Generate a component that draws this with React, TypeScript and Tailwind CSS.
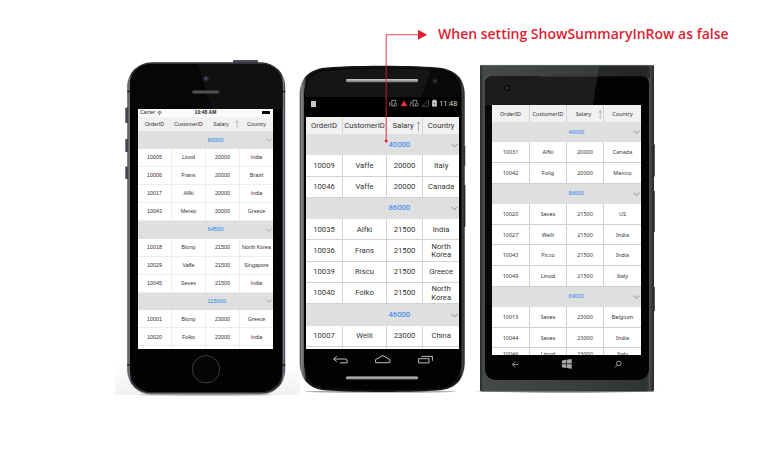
import React from "react";

type Line = { summary: string } | { cells: string[] };

const group = (summary: string): Line => ({ summary });
const row = (...cells: string[]): Line => ({ cells });

interface GridProps {
  lines: Line[];
  cols: string;
  text: string;
  summaryText: string;
  headerHeight: string;
  groupHeight: string;
  rowHeight: string;
  lastHeight: string;
  line: string;
  arrow: string;
  chevron: string;
}

const HEADERS = ["OrderID", "CustomerID", "Salary", "Country"];

function Grid(p: GridProps) {
  return (
    <div className={`bg-white text-[#333] ${p.text}`}>
      <div className={`grid ${p.cols} ${p.headerHeight} bg-[#f1f1f1]`}>
        {HEADERS.map((h, i) => (
          <div
            key={h}
            className={`relative flex items-center justify-center whitespace-nowrap pt-[1px] ${i < 3 ? `border-r ${p.line}` : ""}`}
          >
            <span className={i === 2 ? "pr-[3px]" : ""}>{h}</span>
            {i === 2 && (
              <svg viewBox="0 0 4 9" className={`absolute ${p.arrow}`} fill="none" stroke="#aaa" strokeWidth="0.8">
                <path d="M2 9V0.7M0.3 2.6L2 0.7L3.7 2.6" />
              </svg>
            )}
          </div>
        ))}
      </div>
      {p.lines.map((l, i) =>
        "summary" in l ? (
          <div key={i} className={`grid ${p.cols} ${i === 0 ? p.groupHeight : p.rowHeight} items-center bg-[#dfdfdf]`}>
            <span className={`col-start-3 pl-[1.5px] text-[#1c84f3] ${p.summaryText}`}>{l.summary}</span>
            <svg
              viewBox="0 0 7 4"
              className={`justify-self-end ${p.chevron}`}
              fill="none"
              stroke="#a5a5a5"
              strokeWidth="1.1"
            >
              <path d="M0.5 0.6L3.5 3.3L6.5 0.6" />
            </svg>
          </div>
        ) : (
          <div key={i} className={`grid ${p.cols} ${i === p.lines.length - 1 ? p.lastHeight : p.rowHeight}`}>
            {l.cells.map((c, j) => (
              <div
                key={j}
                className={`flex items-center justify-center border-b pt-[1px] text-center ${p.line} ${j < 3 ? "border-r" : ""}`}
              >
                {c}
              </div>
            ))}
          </div>
        ),
      )}
    </div>
  );
}

function IPhone() {
  return (
    <section className="relative h-[350px] w-[185px] shrink-0 pt-[53px] pl-[23px]">
      <svg viewBox="115 56 185 350" className="absolute inset-0 h-full w-full">
        <defs>
          <linearGradient id="floorA" x1="0" y1="0" x2="0" y2="1">
            <stop offset="0" stopColor="#fff" />
            <stop offset="1" stopColor="#f1f1f1" />
          </linearGradient>
          <linearGradient id="steelA" x1="0" y1="0" x2="1" y2="0">
            <stop offset="0" stopColor="#3b3f46" />
            <stop offset="0.012" stopColor="#777b82" />
            <stop offset="0.025" stopColor="#30333a" />
            <stop offset="0.975" stopColor="#30333a" />
            <stop offset="0.988" stopColor="#777b82" />
            <stop offset="1" stopColor="#3b3f46" />
          </linearGradient>
          <clipPath id="faceA">
            <rect x="130" y="64" width="152.5" height="328" rx="21" />
          </clipPath>
        </defs>
        <rect x="115" y="363" width="185" height="32" fill="url(#floorA)" />
        <ellipse cx="206" cy="394.6" rx="67" ry="1.4" fill="#c8c8c8" />
        <rect x="233" y="60" width="25" height="4" rx="0.8" fill="#4b4e54" />
        <rect x="125.3" y="107.5" width="3" height="15.5" rx="0.8" fill="#44484f" />
        <rect x="125.3" y="139" width="3" height="13" rx="0.8" fill="#44484f" />
        <rect x="125.3" y="166.5" width="3" height="12.5" rx="0.8" fill="#44484f" />
        <rect x="127.3" y="62.3" width="157.9" height="332" rx="24" fill="url(#steelA)" />
        <path d="M135 388C140 393 146 393.7 153 393.7H260C267 393.7 273 393 278 387" fill="none" stroke="#999" strokeWidth="0.7" />
        <path d="M127.3 91.5h3M282 91.5h3.2M127.3 365h3M282 365h3.2" stroke="#15171a" strokeWidth="1.3" />
        <g clipPath="url(#faceA)">
          <rect x="127" y="62" width="160" height="334" fill="#030303" />
          <path d="M197 62L211 109H283V62Z" fill="#101010" />
          <path d="M127 62H197L211 109H127Z" fill="#060606" />
        </g>
        <circle cx="206" cy="78.6" r="3" fill="#23252b" />
        <circle cx="206" cy="78.6" r="1.3" fill="#4a5064" />
        <rect x="192" y="90.3" width="27.5" height="3.4" rx="1.5" fill="#383838" />
        <rect x="193" y="91.3" width="25" height="1.6" rx="0.8" fill="#555" />
        <circle cx="206" cy="369.3" r="13.7" fill="#050505" stroke="#3c3c3c" strokeWidth="1" />
      </svg>
      <div className="relative h-[240px] w-[135px] overflow-hidden bg-white font-['Liberation_Sans',sans-serif]">
        <div className="grid h-[7.5px] grid-cols-3 items-center bg-[#fbfbfb] text-[5px] leading-[7px] text-[#222]">
          <div className="flex items-center gap-[2px] pl-[2px]">
            Carrier
            <svg viewBox="0 0 6 5" className="h-[4px] w-[5px]" fill="none" stroke="#222">
              <path d="M0.4 1.7Q3 -0.5 5.6 1.7" strokeWidth="0.9" />
              <path d="M1.4 3Q3 1.6 4.6 3" strokeWidth="0.8" />
              <circle cx="3" cy="4.2" r="0.3" />
            </svg>
          </div>
          <div className="text-center font-bold whitespace-nowrap">10:48 AM</div>
          <div className="flex items-center justify-end pr-[3px]">
            <span className="h-[3px] w-[8px] rounded-[0.5px] bg-black" />
          </div>
        </div>
        <Grid
          cols="grid-cols-[34px_34px_34px_33px]"
          text="text-[5.4px] leading-[7px]"
          summaryText="text-[5.7px]"
          headerHeight="h-[14.5px]"
          groupHeight="h-[18px]"
          rowHeight="h-[17.95px]"
          lastHeight="h-[17.95px]"
          line="border-[#ececec]"
          arrow="right-[0.5px] top-[3px] h-[8.5px] w-[4px]"
          chevron="mr-[1px] h-[4px] w-[6px]"
          lines={[
            group("80000"),
            row("10005", "Linod", "20000", "India"),
            row("10006", "Frans", "20000", "Brazil"),
            row("10017", "Alfki", "20000", "India"),
            row("10043", "Merep", "20000", "Greece"),
            group("64500"),
            row("10018", "Blonp", "21500", "North Korea"),
            row("10029", "Vaffe", "21500", "Singapore"),
            row("10045", "Seves", "21500", "India"),
            group("115000"),
            row("10001", "Blonp", "23000", "Greece"),
            row("10020", "Folko", "23000", "India"),
            row("", "", "", ""),
          ]}
        />
      </div>
    </section>
  );
}

function AndroidPhone() {
  return (
    <section className="relative h-[350px] w-[168px] shrink-0 pt-[41px] pl-[6px] font-[Roboto,sans-serif]">
      <svg viewBox="300 56 168 350" className="absolute inset-0 h-full w-full overflow-visible">
        <defs>
          <linearGradient id="edgeB" x1="0" y1="0" x2="1" y2="0">
            <stop offset="0" stopColor="#414141" />
            <stop offset="0.012" stopColor="#858585" />
            <stop offset="0.03" stopColor="#4e4e4e" />
            <stop offset="0.04" stopColor="#151515" />
            <stop offset="0.97" stopColor="#151515" />
            <stop offset="0.988" stopColor="#444" />
            <stop offset="1" stopColor="#171717" />
          </linearGradient>
          <linearGradient id="speakerB" x1="0" y1="0" x2="0" y2="1">
            <stop offset="0" stopColor="#d2cec9" />
            <stop offset="1" stopColor="#77726c" />
          </linearGradient>
        </defs>
        <ellipse cx="380" cy="391.6" rx="77" ry="1.2" fill="#aaa" />
        <rect x="463" y="146" width="2.4" height="20" rx="0.7" fill="#666" />
        <rect x="463" y="185" width="2.4" height="42" rx="0.7" fill="#333" />
        <path
          d="M299.7 95C299.7 77 310 70.5 322 68C345 65 419 65 442 68C454 70.5 464.7 77 464.7 95V362C464.7 380 455 388 442 390C419 392.6 345 392.6 322 390C310 388 299.7 380 299.7 362Z"
          fill="url(#edgeB)"
        />
        <path
          d="M304 97C304 79 312 72 323 70C345 67 419 67 441 70C453 72 461.5 79 461.5 97V361C461.5 378 453 386 441 388C419 390.7 345 390.7 323 388C312 386 304 378 304 361Z"
          fill="#020202"
        />
        <path d="M305 97C305 79 313 73 323 71C345 68 410 68 431 69.5L422 97Z" fill="#151515" />
        <path d="M431 69.5C450 71 460 78 461 97H422Z" fill="#090909" />
        <rect x="346" y="79" width="72" height="3.2" rx="1.2" fill="url(#speakerB)" />
        <circle cx="435" cy="81" r="2.7" fill="#1d1b1e" />
        <circle cx="435" cy="81" r="1" fill="#47384a" />
        <rect x="346" y="376.5" width="72" height="3" rx="1.2" fill="url(#speakerB)" />
        <g fill="none" stroke="#d5d5d5" strokeWidth="0.9">
          <path d="M336.8 356.2L333.8 359L336.8 361.8M333.8 359H345Q347.2 359 347.2 361V362.8H340" />
          <path d="M375.6 359.6L382.7 355.5L390 359.6V362.7H375.6Z" />
          <path d="M418.6 358.7H429V362.9H418.6ZM421.5 356.4H432.4V360.8" />
        </g>
      </svg>
      <div className="relative flex h-[20px] w-[153.3px] items-start justify-between bg-black pt-[2px] pr-[2px] pl-[5px] text-[7.3px] leading-[8px] text-[#ddd]">
        <span className="mt-[2px] h-[6px] w-[5px] bg-[#c8c8c8]" />
        <span className="flex items-center gap-[2px]">
          <svg viewBox="390 99 48 9" className="h-[9px] w-[48px]">
            <g fill="none" stroke="#ccc" strokeWidth="0.7">
              <path d="M390.7 102V106" />
              <path d="M392.8 100.3H396.5V102.3M392.8 100.3V106H395" />
              <circle cx="396.5" cy="104.6" r="1.4" />
              <path d="M411 102H412.2V103.8H411V105.8H412.4" strokeWidth="0.5" />
              <path d="M414 100.3H417.7V102.3M414 100.3V106H416.2" />
              <circle cx="417.7" cy="104.6" r="1.4" />
              <path d="M423 106.3L429.5 100V106.3Z" stroke="#777" strokeWidth="0.6" />
            </g>
            <path d="M405 100.3L408.5 106.3H401.5Z" fill="#e8222d" />
            <path d="M404 104.2H406.2" stroke="#ffb3b3" strokeWidth="0.6" />
            <path d="M434.3 99.7H436.5V100.4H437.8V106.4H433.2V100.4H434.3Z" fill="#ddd" />
            <path d="M435.8 101.7L434.7 103.7H436.3L435.4 105.4" fill="none" stroke="#333" strokeWidth="0.6" />
          </svg>
          <span>11:48</span>
        </span>
      </div>
      <div className="relative h-[232px] w-[153.3px] overflow-hidden bg-white">
        <Grid
          cols="grid-cols-[37px_44px_36px_36.3px]"
          text="text-[7.7px] leading-[8.5px]"
          summaryText="text-[7.7px]"
          headerHeight="h-[17.3px]"
          groupHeight="h-[21px]"
          rowHeight="h-[21.3px]"
          lastHeight="h-[21.3px]"
          line="border-[#d3d3d3]"
          arrow="right-[1px] top-[4px] h-[10.5px] w-[5px]"
          chevron="mr-[1px] h-[4.5px] w-[7px]"
          lines={[
            group("40000"),
            row("10009", "Vaffe", "20000", "Italy"),
            row("10046", "Vaffe", "20000", "Canada"),
            group("86000"),
            row("10035", "Alfki", "21500", "India"),
            row("10036", "Frans", "21500", "North Korea"),
            row("10039", "Riscu", "21500", "Greece"),
            row("10040", "Folko", "21500", "North Korea"),
            group("46000"),
            row("10007", "Welli", "23000", "China"),
            row("", "", "", ""),
          ]}
        />
      </div>
    </section>
  );
}

function WindowsPhone() {
  return (
    <section className="relative h-[350px] w-[196px] shrink-0 pt-[49px] pl-[24px] font-['Noto_Sans',sans-serif]">
      <svg viewBox="468 56 196 350" className="absolute inset-0 h-full w-full">
        <defs>
          <linearGradient id="caseC" x1="0" y1="0" x2="1" y2="0">
            <stop offset="0" stopColor="#292c2d" />
            <stop offset="0.02" stopColor="#464a4b" />
            <stop offset="0.5" stopColor="#3b3f40" />
            <stop offset="0.96" stopColor="#303334" />
            <stop offset="0.975" stopColor="#4a4d4e" />
            <stop offset="1" stopColor="#242627" />
          </linearGradient>
          <radialGradient id="floorC">
            <stop offset="0.8" stopColor="#aaa" />
            <stop offset="1" stopColor="#fff" />
          </radialGradient>
          <clipPath id="faceC">
            <path d="M485 84Q485 76.3 493 76.3H641Q649 76.3 649 84V368Q649 380 637 380H497Q485 380 485 368Z" />
          </clipPath>
        </defs>
        <ellipse cx="567" cy="391.2" rx="95" ry="1.8" fill="url(#floorC)" />
        <rect x="652" y="144.5" width="2.8" height="32" fill="#292b2c" />
        <rect x="652" y="191" width="2.8" height="41" fill="#292b2c" />
        <rect x="652" y="287" width="2.8" height="24" fill="#292b2c" />
        <path d="M480 66Q480 65 481 65H653Q654 65 654 66V390Q654 391.5 652 391.5H482Q480 391.5 480 390Z" fill="url(#caseC)" />
        <path d="M599 66H650V78H597Z" fill="#1e2021" opacity="0.65" />
        <path d="M480.5 65.4H653.5" stroke="#686b6c" strokeWidth="0.8" />
        <g clipPath="url(#faceC)">
          <rect x="485" y="76" width="164" height="305" fill="#030303" />
          <path d="M485 76H597.5L593 105V125H485Z" fill="#1c1c1c" />
          <rect x="485" y="105" width="7" height="200" fill="#090909" />
          <path d="M538 76.7H598" stroke="#444" strokeWidth="0.8" />
        </g>
        <circle cx="507" cy="88" r="4.2" fill="#101010" stroke="#292929" strokeWidth="0.7" />
        <circle cx="507" cy="88" r="1.6" fill="#303330" />
        <path d="M515.2 361.5L512.3 364.4L515.2 367.3M512.3 364.4H518.4" fill="none" stroke="#aaa" strokeWidth="0.9" />
        <path d="M562 360.5L566 359.8V363.6H562ZM566.6 359.7L571.7 358.9V363.6H566.6ZM562 364.2H566V367.9L562 367.3ZM566.6 364.2H571.7V368.8L566.6 368Z" fill="#aaa" />
        <circle cx="618.8" cy="363.4" r="2.3" fill="none" stroke="#999" strokeWidth="1" />
        <path d="M617.1 365.2L615 367.4" stroke="#999" strokeWidth="1" />
      </svg>
      <div className="relative h-[250px] w-[149px] overflow-hidden bg-white">
        <Grid
          cols="grid-cols-[38px_37px_37px_37px]"
          text="text-[5.5px] leading-[7px]"
          summaryText="text-[5.5px]"
          headerHeight="h-[17.3px]"
          groupHeight="h-[20.2px]"
          rowHeight="h-[20.6px]"
          lastHeight="h-[12px]"
          line="border-[#cfcfcf]"
          arrow="right-[1px] top-[4.5px] h-[9.5px] w-[4.5px]"
          chevron="mr-[1px] h-[4px] w-[7px]"
          lines={[
            group("40000"),
            row("10031", "Alfki", "20000", "Canada"),
            row("10042", "Folig", "20000", "Mexico"),
            group("86000"),
            row("10020", "Seves", "21500", "US"),
            row("10027", "Welli", "21500", "India"),
            row("10043", "Picco", "21500", "India"),
            row("10049", "Linod", "21500", "Italy"),
            group("69000"),
            row("10013", "Seves", "23000", "Belgium"),
            row("10044", "Seves", "23000", "India"),
            row("10046", "Linod", "23000", "Italy"),
          ]}
        />
      </div>
    </section>
  );
}

export default function App() {
  return (
    <main className="relative h-[456px] w-[781px] overflow-hidden bg-white">
      <header className="flex h-[56px] items-start pt-[24px] pl-[438px]">
        <h1 className="font-['Open_Sans',sans-serif] text-[14px] leading-[20px] font-semibold whitespace-nowrap text-[#dc1f34]">
          When setting ShowSummaryInRow as false
        </h1>
      </header>
      <div className="flex pl-[115px]">
        <IPhone />
        <AndroidPhone />
        <WindowsPhone />
      </div>
      <svg viewBox="380 26 52 120" className="absolute top-[26px] left-[380px] h-[120px] w-[52px]">
        <path d="M386.2 141V34.7H419" fill="none" stroke="#dc1f34" strokeWidth="1.1" opacity="0.8" />
        <path d="M418 29.7L427.2 34.7L418 39.7Z" fill="#dc1f34" />
        <circle cx="386.2" cy="141" r="1.5" fill="#dc1f34" />
      </svg>
    </main>
  );
}
